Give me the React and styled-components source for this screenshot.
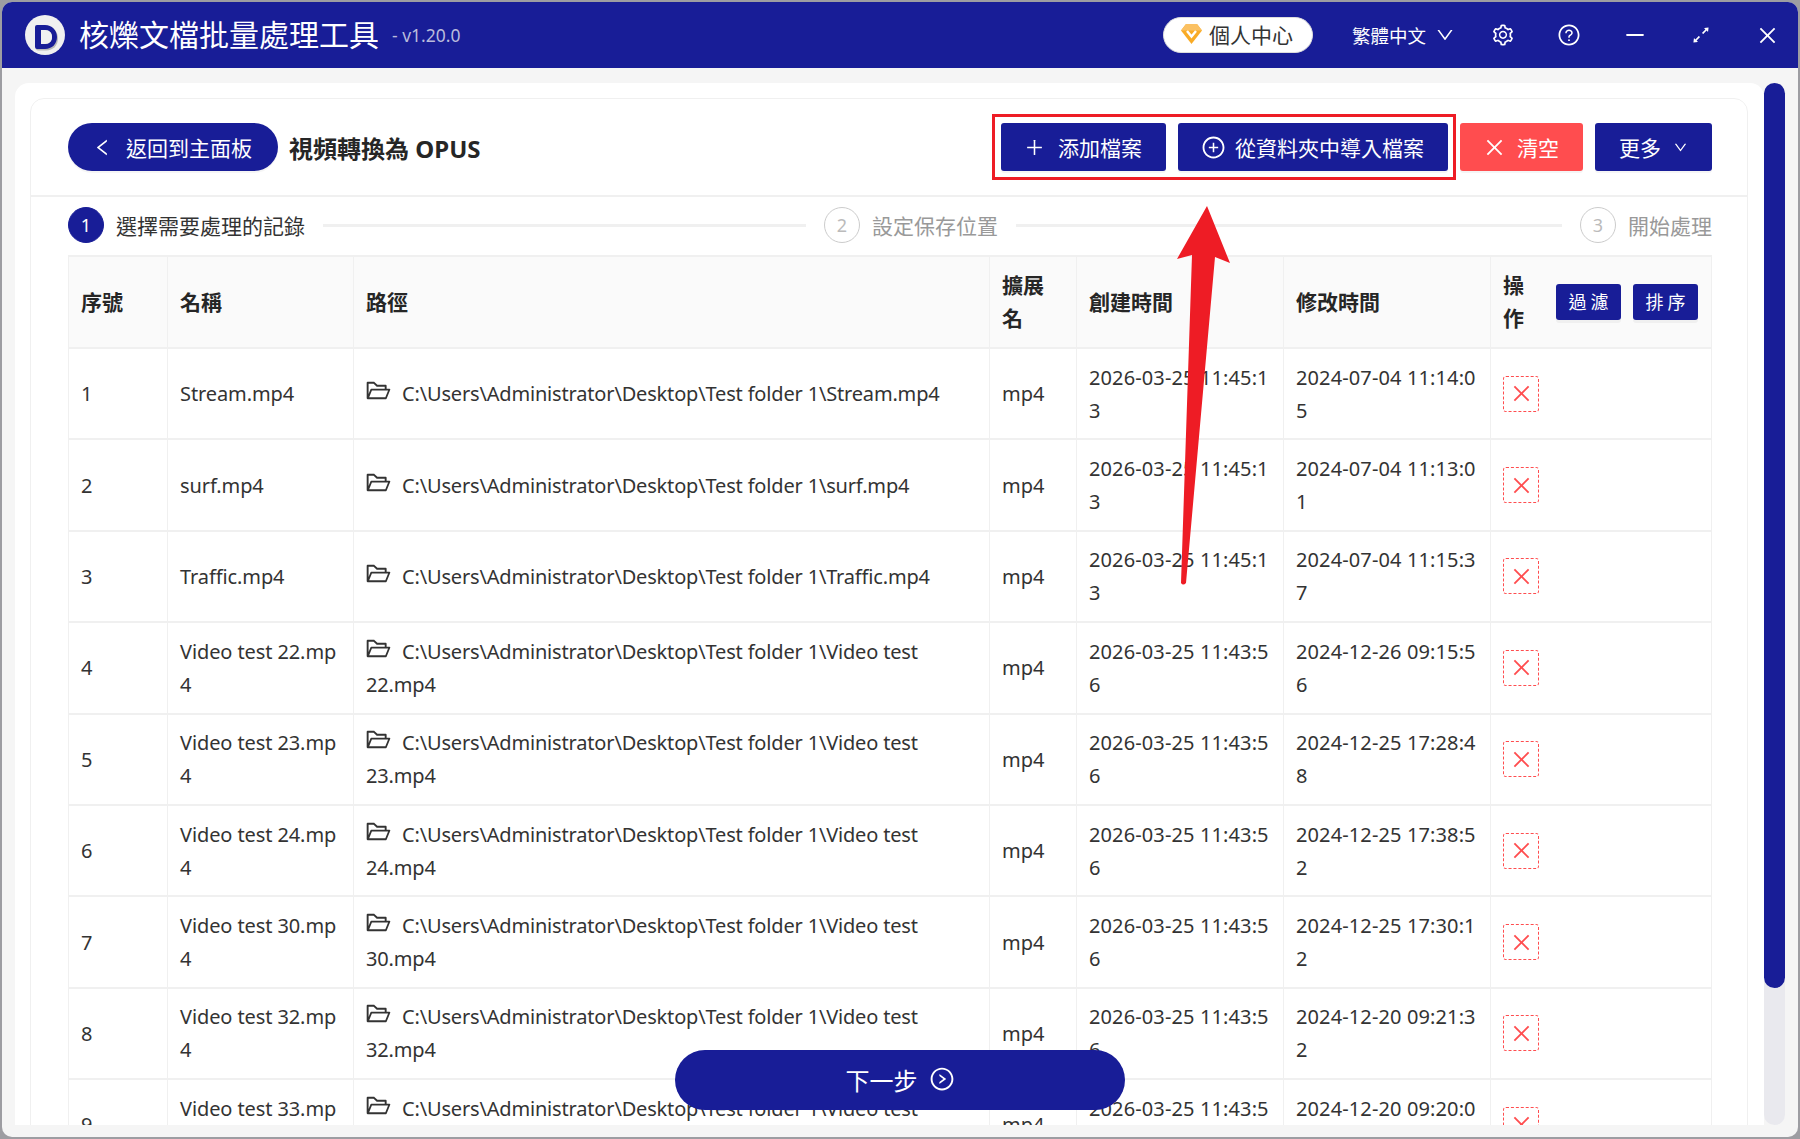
import React from 'react'
import styled, { createGlobalStyle } from 'styled-components'
import {
  AiOutlineArrowsAlt,
  AiOutlineClose,
  AiOutlineDown,
  AiOutlineFolderOpen,
  AiOutlineLeft,
  AiOutlineMinus,
  AiOutlinePlus,
  AiOutlinePlusCircle,
  AiOutlineQuestionCircle,
  AiOutlineRightCircle,
  AiOutlineSetting,
} from 'react-icons/ai'

const NAVY = '#181d97'
const RED = '#ff4d4f'
const LINE = '#f0f0f0'

const GlobalStyle = createGlobalStyle`
  html, body {
    margin: 0;
    padding: 0;
  }
  body {
    font-family: "Noto Sans", "Noto Sans CJK TC", sans-serif;
    color: #333;
  }
  * {
    box-sizing: border-box;
  }
`

const Page = styled.div`
  position: relative;
  width: 1800px;
  height: 1139px;
  padding: 2px;
  background: #9d9da2;
  overflow: hidden;
`

const Window = styled.div`
  display: flex;
  flex-direction: column;
  height: 100%;
  border-radius: 10px;
  overflow: hidden;
  background: #f5f5f5;
`

const TitleBar = styled.header`
  display: flex;
  align-items: center;
  flex: none;
  height: 66px;
  padding: 0 19px 0 23px;
  background: ${NAVY};
  color: #fff;
`

const AppName = styled.h1`
  margin: 0 0 0 14px;
  font-size: 30px;
  font-weight: 400;
  line-height: 1;
`

const Version = styled.span`
  margin-left: 13px;
  font-size: 17.5px;
  color: #b9bbdc;
`

const TitleActions = styled.div`
  display: flex;
  align-items: center;
  margin-left: auto;
`

const Pill = styled.button`
  display: flex;
  align-items: center;
  gap: 7px;
  height: 36px;
  padding: 0 19px 2px 17px;
  border: 1px solid #ddd;
  border-radius: 18px;
  background: #fff;
  color: #333;
  font: inherit;
  font-size: 21px;
`

const Lang = styled.div`
  display: flex;
  align-items: center;
  gap: 9px;
  margin: 0 36px 0 39px;
  font-size: 18.5px;
`

const WindowIcons = styled.div`
  display: flex;
  align-items: center;
  gap: 42px;
`

const WindowIcon = styled.span`
  display: flex;
  align-items: center;
  justify-content: center;
  width: 24px;
  height: 24px;
  font-size: ${(p) => p.$size}px;
`

const Body = styled.div`
  display: flex;
  flex: 1;
  min-height: 0;
  padding: 15px 13px 12px 13px;
`

const Panel = styled.main`
  flex: 1;
  min-width: 0;
  padding: 15px 16px 0 15px;
  border-radius: 14px 14px 0 0;
  background: #fff;
  overflow: hidden;
`

const Scrollbar = styled.div`
  flex: none;
  width: 21px;
  border-radius: 11px;
  background: #e9e9ee;
`

const Thumb = styled.div`
  height: 905px;
  border-radius: 11px;
  background: ${NAVY};
`

const Card = styled.section`
  border: 1px solid ${LINE};
  border-radius: 14px 14px 0 0;
  padding-bottom: 40px;
`

const CardHeader = styled.div`
  display: flex;
  align-items: center;
  height: 98px;
  padding: 0 35px 0 37px;
  border-bottom: 2px solid ${LINE};
`

const BackButton = styled.button`
  display: flex;
  align-items: center;
  gap: 13px;
  width: 210px;
  height: 48px;
  padding: 0 0 0 24px;
  border: 0;
  border-radius: 24px;
  background: ${NAVY};
  box-shadow: 0 2px 0 rgba(0, 0, 0, 0.04);
  color: #fff;
  font: inherit;
  font-size: 21px;
`

const PageTitle = styled.h2`
  margin: 0 0 0 11px;
  font-size: 24px;
  font-weight: 700;
  color: #262626;
`

const Toolbar = styled.div`
  display: flex;
  gap: 12px;
  margin-left: auto;
`

const ToolButton = styled.button`
  display: flex;
  align-items: center;
  gap: ${(p) => p.$gap}px;
  height: 48px;
  padding: 0 24px 0 ${(p) => p.$left || 23}px;
  border: 0;
  border-radius: 3px;
  background: ${(p) => (p.$danger ? RED : NAVY)};
  box-shadow: 0 2px 0 rgba(0, 0, 0, 0.04);
  color: #fff;
  font: inherit;
  font-size: 21px;
`

const Steps = styled.ol`
  display: flex;
  align-items: center;
  height: 36px;
  margin: 10px 35px 12px 37px;
  padding: 0;
  list-style: none;
`

const Step = styled.li`
  display: flex;
  flex: ${(p) => (p.$last ? 'none' : 1)};
  align-items: center;
  gap: 12px;
  padding-right: ${(p) => (p.$last ? 0 : 18)}px;
  color: ${(p) => (p.$active ? '#333' : '#999')};
  font-size: 21px;
`

const StepNumber = styled.span`
  display: flex;
  align-items: center;
  justify-content: center;
  flex: none;
  width: 36px;
  height: 36px;
  border: 1px solid ${(p) => (p.$active ? NAVY : '#ccc')};
  border-radius: 50%;
  background: ${(p) => (p.$active ? NAVY : '#fff')};
  color: ${(p) => (p.$active ? '#fff' : '#bbb')};
  font-size: 18px;
`

const StepLine = styled.span`
  flex: 1;
  height: 3px;
  margin-left: 6px;
  background: ${LINE};
`

const TableWrap = styled.div`
  margin: 0 35px 0 37px;
`

const Table = styled.table`
  width: 1644px;
  border-collapse: separate;
  border-spacing: 0;
  table-layout: fixed;
  border-top: 2px solid ${LINE};
  border-left: 1px solid ${LINE};
  font-size: 20px;
  line-height: 33px;
`

const Th = styled.th`
  height: 92px;
  padding: 0 12px;
  border-right: 1px solid ${LINE};
  border-bottom: 2px solid ${LINE};
  background: #fafafa;
  color: #262626;
  font-size: 21px;
  font-weight: 700;
  text-align: left;
`

const Td = styled.td`
  height: 91.4px;
  padding: 0 12px;
  border-right: 1px solid ${LINE};
  border-bottom: 2px solid ${LINE};
  white-space: nowrap;
  vertical-align: middle;
`

const ActionHead = styled.div`
  display: flex;
  align-items: center;
  justify-content: space-between;
  padding-right: 1px;
`

const ActionLabel = styled.span`
  display: block;
  width: 22px;
  line-height: 33px;
`

const FilterButtons = styled.div`
  display: flex;
  gap: 12px;
`

const SmallButton = styled.button`
  width: 65px;
  height: 36px;
  padding: 0;
  border: 0;
  border-radius: 3px;
  background: ${NAVY};
  box-shadow: 0 3px 0 rgba(0, 0, 0, 0.04);
  color: #fff;
  font: inherit;
  font-size: 18px;
  font-weight: 400;
  letter-spacing: 4px;
  text-indent: 4px;
`

const NameText = styled.span`
  letter-spacing: -0.1px;
`

const PathText = styled.span`
  letter-spacing: -0.17px;
`

const DateText = styled.span`
  letter-spacing: 0.12px;
`

const FolderIcon = styled(AiOutlineFolderOpen)`
  margin: 0 10px 0 -1px;
  font-size: 27px;
  color: #333;
  vertical-align: -3px;
`

const DeleteButton = styled.button`
  display: flex;
  align-items: center;
  justify-content: center;
  width: 36px;
  height: 36px;
  padding: 0;
  border: 1px dashed ${RED};
  border-radius: 3px;
  background: #fff;
  color: ${RED};
  font-size: 23px;
`

const NextButton = styled.button`
  position: absolute;
  left: 675px;
  top: 1050px;
  display: flex;
  align-items: center;
  justify-content: center;
  gap: 11px;
  width: 450px;
  height: 60px;
  padding: 0 0 2px;
  border: 0;
  border-radius: 30px;
  background: ${NAVY};
  color: #fff;
  font: inherit;
  font-size: 24px;
`

const NextIcon = styled(AiOutlineRightCircle)`
  font-size: 26px;
`

const RedBox = styled.div`
  position: absolute;
  left: 992px;
  top: 114px;
  width: 464px;
  height: 66px;
  border: 3px solid #ee1c25;
  pointer-events: none;
`

const ArrowMark = styled.svg`
  position: absolute;
  left: 0;
  top: 0;
  pointer-events: none;
`

const Logo = () => (
  <svg width="40" height="40" viewBox="0 0 40 40">
    <circle cx="20" cy="20" r="20" fill="#f0f0f0" />
    <path
      d="M12 10h8c7 0 12 5 12 12s-5 12-12 12h-8a2 2 0 0 1-2-2V12a2 2 0 0 1 2-2z"
      fill="#b9b9b9"
      transform="translate(1 1.5)"
    />
    <path
      fillRule="evenodd"
      d="M12 10h8c7 0 12 5 12 12s-5 12-12 12h-8a2 2 0 0 1-2-2V12a2 2 0 0 1 2-2zM16 15v14h4c4.500 0 7-3 7-7s-2.500-7-7-7z"
      fill={NAVY}
    />
    <path d="M16 15v14h4c4.500 0 7-3 7-7s-2.500-7-7-7z" fill="#f0f0f0" />
  </svg>
)

const Gem = () => (
  <svg width="21" height="20" viewBox="0 0 21 20">
    <path d="M5 0h11l5 6.500L10.500 20 0 6.500z" fill="#f9ab25" />
    <path d="M0 6.500 5 0h11l5 6.500z" fill="#fbc163" />
    <path d="M6 7l4.500 5.500L15 7" fill="none" stroke="#fff" strokeWidth="2.400" />
  </svg>
)

const rows = [
  ['1', 'Stream.mp4', '', 'C:\\Users\\Administrator\\Desktop\\Test folder 1\\Stream.mp4', '', '2026-03-25 11:45:1', '3', '2024-07-04 11:14:0', '5'],
  ['2', 'surf.mp4', '', 'C:\\Users\\Administrator\\Desktop\\Test folder 1\\surf.mp4', '', '2026-03-25 11:45:1', '3', '2024-07-04 11:13:0', '1'],
  ['3', 'Traffic.mp4', '', 'C:\\Users\\Administrator\\Desktop\\Test folder 1\\Traffic.mp4', '', '2026-03-25 11:45:1', '3', '2024-07-04 11:15:3', '7'],
  ['4', 'Video test 22.mp', '4', 'C:\\Users\\Administrator\\Desktop\\Test folder 1\\Video test', '22.mp4', '2026-03-25 11:43:5', '6', '2024-12-26 09:15:5', '6'],
  ['5', 'Video test 23.mp', '4', 'C:\\Users\\Administrator\\Desktop\\Test folder 1\\Video test', '23.mp4', '2026-03-25 11:43:5', '6', '2024-12-25 17:28:4', '8'],
  ['6', 'Video test 24.mp', '4', 'C:\\Users\\Administrator\\Desktop\\Test folder 1\\Video test', '24.mp4', '2026-03-25 11:43:5', '6', '2024-12-25 17:38:5', '2'],
  ['7', 'Video test 30.mp', '4', 'C:\\Users\\Administrator\\Desktop\\Test folder 1\\Video test', '30.mp4', '2026-03-25 11:43:5', '6', '2024-12-25 17:30:1', '2'],
  ['8', 'Video test 32.mp', '4', 'C:\\Users\\Administrator\\Desktop\\Test folder 1\\Video test', '32.mp4', '2026-03-25 11:43:5', '6', '2024-12-20 09:21:3', '2'],
  ['9', 'Video test 33.mp', '4', 'C:\\Users\\Administrator\\Desktop\\Test folder 1\\Video test', '33.mp4', '2026-03-25 11:43:5', '6', '2024-12-20 09:20:0', '9'],
]

const Lines = ({ first, second }) => (
  <>
    {first}
    {second && <br />}
    {second}
  </>
)

export default function App() {
  return (
    <Page>
      <GlobalStyle />
      <Window>
        <TitleBar>
          <Logo />
          <AppName>核爍文檔批量處理工具</AppName>
          <Version>- v1.20.0</Version>
          <TitleActions>
            <Pill>
              <Gem />
              個人中心
            </Pill>
            <Lang>
              繁體中文
              <AiOutlineDown size={20} />
            </Lang>
            <WindowIcons>
              <WindowIcon $size={24}><AiOutlineSetting /></WindowIcon>
              <WindowIcon $size={24}><AiOutlineQuestionCircle /></WindowIcon>
              <WindowIcon $size={24}><AiOutlineMinus /></WindowIcon>
              <WindowIcon $size={22}><AiOutlineArrowsAlt /></WindowIcon>
              <WindowIcon $size={23}><AiOutlineClose /></WindowIcon>
            </WindowIcons>
          </TitleActions>
        </TitleBar>
        <Body>
          <Panel>
            <Card>
              <CardHeader>
                <BackButton>
                  <AiOutlineLeft size={21} />
                  返回到主面板
                </BackButton>
                <PageTitle>視頻轉換為 OPUS</PageTitle>
                <Toolbar>
                  <ToolButton $gap={13}>
                    <AiOutlinePlus size={21} />
                    添加檔案
                  </ToolButton>
                  <ToolButton $gap={9}>
                    <AiOutlinePlusCircle size={25} />
                    從資料夾中導入檔案
                  </ToolButton>
                  <ToolButton $danger $gap={11}>
                    <AiOutlineClose size={23} />
                    清空
                  </ToolButton>
                  <ToolButton $left={24} $gap={12}>
                    更多
                    <AiOutlineDown size={15} />
                  </ToolButton>
                </Toolbar>
              </CardHeader>
              <Steps>
                <Step $active>
                  <StepNumber $active>1</StepNumber>
                  選擇需要處理的記錄
                  <StepLine />
                </Step>
                <Step>
                  <StepNumber>2</StepNumber>
                  設定保存位置
                  <StepLine />
                </Step>
                <Step $last>
                  <StepNumber>3</StepNumber>
                  開始處理
                </Step>
              </Steps>
              <TableWrap>
                <Table>
                  <colgroup>
                    <col width="99" />
                    <col width="186" />
                    <col width="636" />
                    <col width="87" />
                    <col width="207" />
                    <col width="207" />
                    <col width="221" />
                  </colgroup>
                  <thead>
                    <tr>
                      <Th>序號</Th>
                      <Th>名稱</Th>
                      <Th>路徑</Th>
                      <Th>擴展<br />名</Th>
                      <Th>創建時間</Th>
                      <Th>修改時間</Th>
                      <Th>
                        <ActionHead>
                          <ActionLabel>操作</ActionLabel>
                          <FilterButtons>
                            <SmallButton>過濾</SmallButton>
                            <SmallButton>排序</SmallButton>
                          </FilterButtons>
                        </ActionHead>
                      </Th>
                    </tr>
                  </thead>
                  <tbody>
                    {rows.map((r) => (
                      <tr key={r[0]}>
                        <Td>{r[0]}</Td>
                        <Td><NameText><Lines first={r[1]} second={r[2]} /></NameText></Td>
                        <Td>
                          <FolderIcon />
                          <PathText><Lines first={r[3]} second={r[4]} /></PathText>
                        </Td>
                        <Td>mp4</Td>
                        <Td><DateText><Lines first={r[5]} second={r[6]} /></DateText></Td>
                        <Td><DateText><Lines first={r[7]} second={r[8]} /></DateText></Td>
                        <Td>
                          <DeleteButton><AiOutlineClose /></DeleteButton>
                        </Td>
                      </tr>
                    ))}
                  </tbody>
                </Table>
              </TableWrap>
            </Card>
          </Panel>
          <Scrollbar>
            <Thumb />
          </Scrollbar>
        </Body>
      </Window>
      <NextButton>
        下一步
        <NextIcon />
      </NextButton>
      <RedBox />
      <ArrowMark width="1800" height="1139" viewBox="0 0 1800 1139">
        <path
          d="M1207 206 L1230 263 L1215 257 L1186 583 Q1183 586 1181 583 L1192 255 L1177 259 Z"
          fill="#ee1c25"
        />
      </ArrowMark>
    </Page>
  )
}
